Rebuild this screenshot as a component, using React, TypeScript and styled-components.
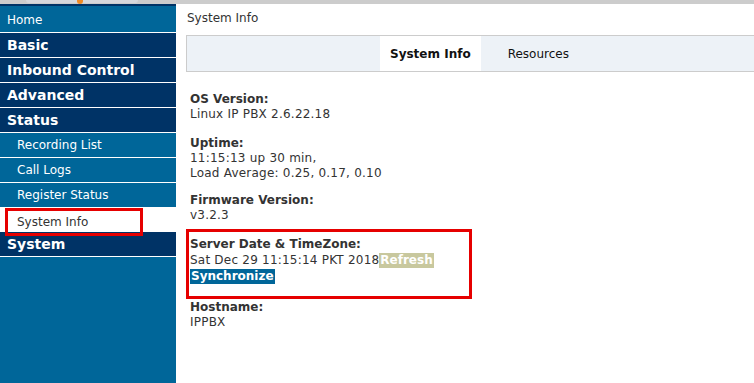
import React from "react";
import styled, { createGlobalStyle } from "styled-components";

const Global = createGlobalStyle`
  html, body { margin: 0; padding: 0; height: 100%; background: #fff; }
  body { font-family: "DejaVu Sans", Verdana, sans-serif; font-size: 12px; color: #333; }
  #root { height: 100%; }
`;

const Page = styled.div`
  display: flex;
  flex-direction: column;
  height: 100vh;
  overflow: hidden;
`;

const TopStrip = styled.div`
  height: 4px;
  flex: 0 0 4px;
  background: #cccccc;
  position: relative;
`;

const TopTab = styled.span`
  position: absolute;
  left: 26px;
  top: 0;
  width: 112px;
  height: 3px;
  border-radius: 0 0 3px 3px;
  background: #d6d8dc;
`;

const TopDot = styled.span`
  position: absolute;
  left: 77px;
  top: 0;
  width: 6px;
  height: 4px;
  border-radius: 0 0 3px 3px;
  background: #f08a24;
`;

const Body = styled.div`
  flex: 1;
  display: flex;
  min-height: 0;
`;

const Sidebar = styled.nav`
  width: 176px;
  flex: 0 0 176px;
  background: #006699;
  border-top: 2px solid #003366;
  display: flex;
  flex-direction: column;
`;

type Kind = "top" | "section" | "sub" | "active";

const NavItem = styled.div<{ $kind: Kind }>`
  position: relative;
  z-index: ${(p) => (p.$kind === "active" ? 1 : 0)};
  height: ${(p) => (p.$kind === "top" ? "27px" : p.$kind === "active" ? "24px" : "25px")};
  flex: 0 0 auto;
  border-bottom: ${(p) => (p.$kind === "active" ? "none" : "1px solid #ffffff")};
  display: flex;
  align-items: ${(p) => (p.$kind === "active" ? "flex-start" : "center")};
  box-sizing: border-box;
  padding-left: ${(p) => (p.$kind === "sub" ? "17px" : p.$kind === "active" ? "0" : "7px")};
  padding-top: ${(p) => (p.$kind === "top" ? "1px" : "0")};
  background: ${(p) =>
    p.$kind === "section" ? "#003366" : p.$kind === "active" ? "#ffffff" : "#006699"};
  color: ${(p) => (p.$kind === "active" ? "#333333" : "#ffffff")};
  font-size: ${(p) => (p.$kind === "section" ? "14px" : "12px")};
  font-weight: ${(p) => (p.$kind === "section" ? "bold" : "normal")};
  white-space: nowrap;
`;

const ActiveBox = styled.div`
  margin-left: 5px;
  width: 138px;
  height: 28px;
  flex: 0 0 auto;
  box-sizing: border-box;
  border: 3px solid #e60000;
  display: flex;
  align-items: center;
  padding-left: 9px;
  color: #333;
`;

const Main = styled.main`
  flex: 1;
  min-width: 0;
  padding: 6px 0 0 10px;
`;

const Crumb = styled.div`
  height: 25px;
  line-height: 16px;
  color: #333;
  padding-left: 1px;
`;

const TabBar = styled.div`
  height: 37px;
  box-sizing: border-box;
  border: 1px solid #cccccc;
  border-right: none;
  background: #edf2f7;
  display: flex;
  align-items: stretch;
  padding-left: 193px;
`;

const Tab = styled.div<{ $active?: boolean }>`
  display: flex;
  align-items: center;
  padding: 0 ${(p) => (p.$active ? "10px" : "27px")};
  background: ${(p) => (p.$active ? "#ffffff" : "transparent")};
  font-weight: ${(p) => (p.$active ? "bold" : "normal")};
  color: #111;
`;

const Info = styled.div`
  padding: 20px 0 0 4px;
  display: flex;
  flex-direction: column;
  line-height: 15px;
`;

const Group = styled.div`
  margin-bottom: 13px;
  &:nth-child(2) {
    padding-top: 1px;
    margin-bottom: 12px;
  }
`;

const FramedGroup = styled.div`
  margin: -7px 0 1px -4px;
  width: 286px;
  height: 70px;
  box-sizing: border-box;
  border: 3px solid #e60000;
  padding: 4px 0 0 1px;
  line-height: 16px;
`;

const Label = styled.div`
  font-weight: bold;
`;

const Value = styled.div`
  letter-spacing: 0.22px;
  white-space: nowrap;
`;

const Btn = styled.span<{ $tone: "khaki" | "blue" }>`
  display: inline-block;
  background: ${(p) => (p.$tone === "khaki" ? "#c8c89e" : "#006699")};
  color: #fff;
  font-weight: bold;
  letter-spacing: 0;
  line-height: 15px;
  padding: 0 1px;
`;

const navTop = ["Basic", "Inbound Control", "Advanced", "Status"];
const statusSubs = ["Recording List", "Call Logs", "Register Status"];

export default function App() {
  return (
    <>
      <Global />
      <Page>
        <TopStrip>
          <TopTab />
          <TopDot />
        </TopStrip>
        <Body>
          <Sidebar>
            <NavItem $kind="top">Home</NavItem>
            {navTop.map((n) => (
              <NavItem key={n} $kind="section">
                {n}
              </NavItem>
            ))}
            {statusSubs.map((n) => (
              <NavItem key={n} $kind="sub">
                {n}
              </NavItem>
            ))}
            <NavItem $kind="active">
              <ActiveBox>System Info</ActiveBox>
            </NavItem>
            <NavItem $kind="section">System</NavItem>
          </Sidebar>
          <Main>
            <Crumb>System Info</Crumb>
            <TabBar>
              <Tab $active>System Info</Tab>
              <Tab>Resources</Tab>
            </TabBar>
            <Info>
              <Group>
                <Label>OS Version:</Label>
                <Value>Linux IP PBX 2.6.22.18</Value>
              </Group>
              <Group>
                <Label>Uptime:</Label>
                <Value>11:15:13 up 30 min,</Value>
                <Value>Load Average: 0.25, 0.17, 0.10</Value>
              </Group>
              <Group>
                <Label>Firmware Version:</Label>
                <Value>v3.2.3</Value>
              </Group>
              <FramedGroup>
                <Label>Server Date &amp; TimeZone:</Label>
                <Value>
                  Sat Dec 29 11:15:14 PKT 2018<Btn $tone="khaki">Refresh</Btn>
                </Value>
                <Value>
                  <Btn $tone="blue">Synchronize</Btn>
                </Value>
              </FramedGroup>
              <Group>
                <Label>Hostname:</Label>
                <Value>IPPBX</Value>
              </Group>
            </Info>
          </Main>
        </Body>
      </Page>
    </>
  );
}
